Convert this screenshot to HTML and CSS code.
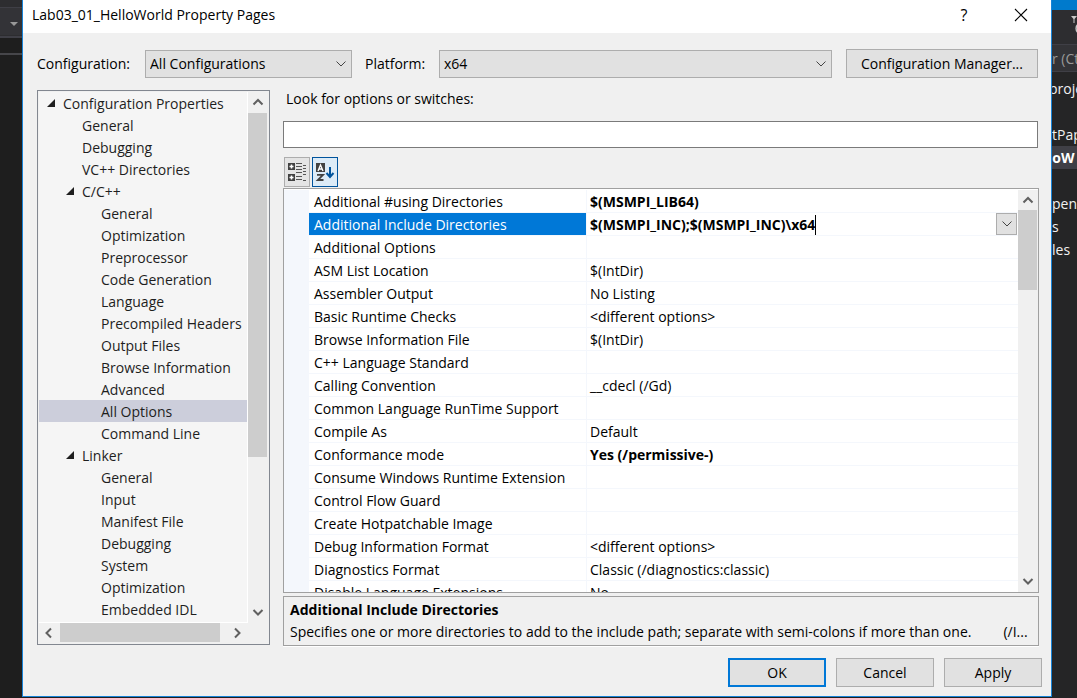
FILE: index.html
```html
<!DOCTYPE html>
<html lang="en">
<head>
<meta charset="utf-8">
<title>Lab03_01_HelloWorld Property Pages</title>
<link rel="stylesheet" href="styles.css">
</head>
<body>
<aside class="ide-left">
  <div class="ide-left-top"></div>
  <div class="ide-left-combo"><svg width="8" height="4" viewBox="0 0 8 4"><path d="M0 0h8L4 4z" fill="#999"/></svg></div>
  <div class="ide-left-line"></div>
  <div class="ide-left-tab"></div>
</aside>
<main class="dialog">
  <header class="titlebar">
    <h1 class="title">Lab03_01_HelloWorld Property Pages</h1>
    <button class="title-btn help" aria-label="Help">?</button>
    <button class="title-btn close" aria-label="Close"><svg width="14" height="14" viewBox="0 0 14 14"><path d="M1 1l12 12M13 1L1 13" stroke="#000" stroke-width="1.1"/></svg></button>
  </header>
  <div class="config-row">
    <label class="config-label" for="cfg">Configuration:</label>
    <select class="combo combo-config" id="cfg"><option>All Configurations</option></select>
    <label class="platform-label" for="plat">Platform:</label>
    <select class="combo combo-platform" id="plat"><option>x64</option></select>
    <button class="btn btn-manager">Configuration Manager...</button>
  </div>
  <div class="content">
    <nav class="tree-pane" aria-label="Configuration Properties">
      <ul class="tree">
        <li class="l0"><svg class="tri" viewBox="0 0 8 8"><path d="M8 0v8H0z"/></svg>Configuration Properties</li>
        <li class="l1">General</li>
        <li class="l1">Debugging</li>
        <li class="l1">VC++ Directories</li>
        <li class="l1"><svg class="tri" viewBox="0 0 8 8"><path d="M8 0v8H0z"/></svg>C/C++</li>
        <li class="l2">General</li>
        <li class="l2">Optimization</li>
        <li class="l2">Preprocessor</li>
        <li class="l2">Code Generation</li>
        <li class="l2">Language</li>
        <li class="l2">Precompiled Headers</li>
        <li class="l2">Output Files</li>
        <li class="l2">Browse Information</li>
        <li class="l2">Advanced</li>
        <li class="l2 selected">All Options</li>
        <li class="l2">Command Line</li>
        <li class="l1"><svg class="tri" viewBox="0 0 8 8"><path d="M8 0v8H0z"/></svg>Linker</li>
        <li class="l2">General</li>
        <li class="l2">Input</li>
        <li class="l2">Manifest File</li>
        <li class="l2">Debugging</li>
        <li class="l2">System</li>
        <li class="l2">Optimization</li>
        <li class="l2">Embedded IDL</li>
      </ul>
      <div class="vscroll">
        <svg class="arrow" viewBox="0 0 20 20"><path d="M5.500 12.500L10 8l4.500 4.500"/></svg>
        <div class="track"><div class="thumb thumb-tree"></div></div>
        <svg class="arrow" viewBox="0 0 20 20"><path d="M5.500 7L10 11.500 14.500 7"/></svg>
      </div>
      <div class="hscroll">
        <svg class="arrow" viewBox="0 0 20 20"><path d="M12 5.500L7.500 10 12 14.500"/></svg>
        <div class="htrack"><div class="hthumb"></div></div>
        <svg class="arrow" viewBox="0 0 20 20"><path d="M7 5.500L11.500 10 7 14.500"/></svg>
      </div>
      <div class="corner"></div>
    </nav>
    <section class="right">
      <label class="search-label" for="look">Look for options or switches:</label>
      <input class="search" id="look" type="text">
      <div class="toolbar">
        <button class="tool" aria-label="Categorized"><svg width="20" height="20" viewBox="0 0 20 20"><path d="M1 1h7v7H1zM1 12h7v7H1z" fill="#424242"/><path d="M4.500 2.500v4M2.500 4.500h4M4.500 13.500v4M2.500 15.500h4" stroke="#fff" stroke-width="1.500"/><path d="M9 1.500h6M9 4.500h6M9 7.500h6M9 10.500h6M9 14.500h6M9 17.500h6M16 3.500h3M16 6.500h3M16 9.500h3M16 12.500h3M16 18.500h3" stroke="#555"/></svg></button>
        <button class="tool active" aria-label="Alphabetical"><svg width="20" height="20" viewBox="0 0 20 20"><path d="M1 1h9v9H1z" fill="#424242"/><path d="M3 9l2.500-6 2.500 6M4 7h3" fill="none" stroke="#fff" stroke-width="1.300"/><path d="M2 12.800h6L2.800 18H8.500" fill="none" stroke="#424242" stroke-width="1.800"/><path d="M15 5v10M11.500 11l3.500 4 3.500-4" fill="none" stroke="#00539c" stroke-width="2"/></svg></button>
      </div>
      <div class="grid-pane">
        <div class="gutter"></div>
        <div class="grid-view">
          <table class="props">
            <tr><th>Additional #using Directories</th><td class="bold">$(MSMPI_LIB64)</td></tr>
            <tr class="current"><th><label for="incdirs">Additional Include Directories</label></th><td class="bold"><div class="editor"><input class="edit" id="incdirs" type="text" value="$(MSMPI_INC);$(MSMPI_INC)\x64"><button class="drop" aria-label="Open list"><svg width="10" height="6" viewBox="0 0 10 6"><path d="M.5.5L5 5 9.500.5" fill="none" stroke="#444"/></svg></button></div></td></tr>
            <tr><th>Additional Options</th><td></td></tr>
            <tr><th>ASM List Location</th><td>$(IntDir)</td></tr>
            <tr><th>Assembler Output</th><td>No Listing</td></tr>
            <tr><th>Basic Runtime Checks</th><td>&lt;different options&gt;</td></tr>
            <tr><th>Browse Information File</th><td>$(IntDir)</td></tr>
            <tr><th>C++ Language Standard</th><td></td></tr>
            <tr><th>Calling Convention</th><td>__cdecl (/Gd)</td></tr>
            <tr><th>Common Language RunTime Support</th><td></td></tr>
            <tr><th>Compile As</th><td>Default</td></tr>
            <tr><th>Conformance mode</th><td class="bold">Yes (/permissive-)</td></tr>
            <tr><th>Consume Windows Runtime Extension</th><td></td></tr>
            <tr><th>Control Flow Guard</th><td></td></tr>
            <tr><th>Create Hotpatchable Image</th><td></td></tr>
            <tr><th>Debug Information Format</th><td>&lt;different options&gt;</td></tr>
            <tr><th>Diagnostics Format</th><td>Classic (/diagnostics:classic)</td></tr>
            <tr><th>Disable Language Extensions</th><td>No</td></tr>
          </table>
        </div>
        <div class="vscroll">
          <svg class="arrow" viewBox="0 0 20 20"><path d="M5.500 12.500L10 8l4.500 4.500"/></svg>
          <div class="track"><div class="thumb thumb-grid"></div></div>
          <svg class="arrow" viewBox="0 0 20 20"><path d="M5.500 7L10 11.500 14.500 7"/></svg>
        </div>
      </div>
      <div class="description">
        <h2 class="desc-title">Additional Include Directories</h2>
        <p class="desc-text"><span>Specifies one or more directories to add to the include path; separate with semi-colons if more than one.</span><span>(/I...</span></p>
      </div>
    </section>
  </div>
  <footer class="buttons">
    <button class="btn btn-action default">OK</button>
    <button class="btn btn-action">Cancel</button>
    <button class="btn btn-action">Apply</button>
  </footer>
</main>
<aside class="ide-right">
  <div class="ide-blue"></div>
  <div class="ide-tools"><i class="sep"></i><svg width="8" height="20" viewBox="0 0 8 20"><path d="M1 1h6L4.500 4v4h-1V4z" fill="#c8c8c8"/><path d="M8 9.500a3.500 4.500 0 0 0 0 8" fill="none" stroke="#c8c8c8" stroke-width="1.500"/></svg></div>
  <div class="ide-search">r (Ct</div>
  <ul class="solution">
    <li class="cut">proje</li><li></li><li>tPap</li><li class="hot">loW</li><li></li><li>pen</li><li>s</li><li>les</li>
  </ul>
</aside>
</body>
</html>
```
FILE: styles.css
```css
* { box-sizing: border-box; }
body {
  margin: 0;
  height: 100vh;
  display: flex;
  overflow: hidden;
  background: #1e1e1e;
  color: #000;
  font: 14px/22px "Open Sans", "Noto Sans", sans-serif;
}
button, input, select { font: inherit; color: inherit; margin: 0; }
ul { list-style: none; margin: 0; padding: 0; }
svg { display: block; flex: none; }

.ide-left { width: 22px; flex: none; }
.ide-left-top { height: 8px; background: #2d2d30; border-bottom: 1px solid #3f3f46; }
.ide-left-combo { height: 27px; padding: 14px 4px 0 10px; background: #333337; overflow: hidden; }
.ide-left-line { height: 3px; background: #2d2d30; border-bottom: 2px solid #3f3f46; }
.ide-left-tab { height: 17px; border-bottom: 2px solid #46464a; }

.ide-right { width: 25px; flex: none; overflow: hidden; background: #252526; color: #f1f1f1; white-space: nowrap; }
.ide-blue { height: 10px; background: #007acc; }
.ide-tools { height: 34px; display: flex; gap: 11px; padding: 5px 0 0 7px; background: #2d2d30; }
.sep { width: 1px; height: 23px; background: #46464a; }
.ide-search { height: 28px; line-height: 28px; background: #333337; color: #999; border: 1px solid #3f3f46; border-width: 1px 0; }
.solution { padding-top: 5px; line-height: 23px; }
.solution li { height: 23px; }
.solution .cut { text-indent: -3px; }
.solution .hot { background: #3f3f46; font-weight: 700; color: #fff; text-indent: -4px; }

.dialog {
  flex: 1;
  min-width: 0;
  display: flex;
  flex-direction: column;
  margin-bottom: 1px;
  background: #f0f0f0;
  border: 1px solid #1883d7;
  border-top: 0;
}
.titlebar { display: flex; align-items: center; height: 33px; padding: 0 9px; background: #fff; }
.title { flex: 1; margin: 0 0 3px; font-size: 14px; font-weight: 400; }
.title-btn { width: 42px; height: 30px; padding: 0; border: 0; background: none; display: flex; align-items: center; justify-content: center; margin-bottom: 4px; }
.help { font-size: 16px; }
.close { margin-left: 15px; }

.config-row { display: flex; align-items: center; padding: 16px 13px 0 14px; height: 45px; flex: none; }
.config-label { width: 108px; }
.platform-label { width: 74px; margin-left: 13px; }
.combo {
  height: 28px;
  padding: 0 0 0 4px;
  border: 1px solid #adadad;
  border-radius: 0;
  appearance: none;
  background: url("data:image/svg+xml,%3Csvg xmlns='http://www.w3.org/2000/svg' width='10' height='6'%3E%3Cpath d='M.5.5L5 5 9.500.5' fill='none' stroke='%23444'/%3E%3C/svg%3E") no-repeat right 5px center #e1e1e1;
}
.combo-config { width: 207px; }
.combo-platform { flex: 1; margin-right: 14px; }
.btn { height: 29px; padding: 0; border: 1px solid #adadad; background: #e1e1e1; }
.btn-manager { width: 192px; }

.content { flex: 1; min-height: 0; display: flex; gap: 13px; padding: 12px 12px 0 14px; }
.tree-pane {
  width: 233px;
  flex: none;
  display: grid;
  grid-template: minmax(0, 1fr) 21px / minmax(0, 1fr) 20px;
  margin-bottom: 1px;
  padding: 1px 1px 0;
  border: 1px solid #828790;
  background: #f0f0f0;
}
.tree { overflow: hidden; background: #f5f5f5; color: #1e1e1e; border-right: 1px solid #fff; border-bottom: 1px solid #fff; }
.tree li { height: 22px; line-height: 24px; display: flex; align-items: flex-start; white-space: nowrap; }
.tree .l0 { padding-left: 24px; }
.tree .l1 { padding-left: 43px; }
.tree .l2 { padding-left: 62px; }
.tree .selected { background: #cccedb; }
.tri { width: 8px; height: 8px; margin: 7px 8px 0 -16px; fill: #1e1e1e; }
.vscroll { width: 20px; display: flex; flex-direction: column; background: #f0f0f0; }
.hscroll { display: flex; background: #f0f0f0; }
.arrow { width: 20px; height: 20px; fill: none; stroke: #606060; stroke-width: 2; }
.track { flex: 1; min-height: 0; }
.htrack { flex: 1; padding-left: 1px; }
.thumb, .hthumb { background: #cdcdcd; }
.thumb { width: 19px; }
.thumb-tree { height: 70%; margin-top: 1px; }
.thumb-grid { height: 22%; }
.hthumb { width: 95%; height: 19px; }

.right { flex: 1; min-width: 0; display: flex; flex-direction: column; }
.search-label { height: 31px; line-height: 18px; padding-left: 3px; flex: none; }
.search { height: 27px; margin-right: 1px; padding: 0 4px; border: 1px solid #7a7a7a; background: #fff; flex: none; }
.toolbar { display: flex; gap: 2px; padding: 9px 0 1px 1px; flex: none; }
.tool { width: 26px; height: 30px; padding: 0 2px; border: 1px solid #adadad; background: #e4e4e4; display: flex; align-items: center; justify-content: center; }
.tool.active { border-color: #00539c; background: #dcebf7; }
.grid-pane { flex: 1; min-height: 0; display: flex; padding: 1px 0 0; border: 1px solid #a0a0a0; background: #fff; }
.gutter { width: 25px; background: #f4f7fc; }
.grid-view { flex: 1; min-width: 0; overflow: hidden; }
.props { width: 100%; border-collapse: separate; border-spacing: 0; table-layout: fixed; }
.props th, .props td { height: 23px; line-height: 20px; text-align: left; white-space: nowrap; border-bottom: 1px solid #f4f7fc; }
.props th { width: 278px; padding: 2px 0 0 5px; font-weight: 400; border-right: 1px solid #f4f7fc; }
.props td { padding: 2px 0 0 3px; }
.props .bold { font-weight: 700; }
.props .current th { background: #0078d7; color: #fff; }
.props .current td { padding-top: 0; }
.editor { display: flex; justify-content: space-between; height: 22px; padding-right: 1px; }
.edit { field-sizing: content; height: 20px; margin-top: 2px; padding: 0; border: 0; border-right: 1px solid #000; background: #fff; outline: 0; }
.drop { width: 21px; height: 22px; padding: 0; border: 1px solid #adadad; background: #e1e1e1; display: flex; align-items: center; justify-content: center; }
.description { flex: none; height: 50px; margin-top: 3px; padding: 1px 6px; border: 1px solid #a0a0a0; box-shadow: 0 1px #fff; }
.desc-title { margin: 0; font-size: 14px; font-weight: 700; line-height: 23px; }
.desc-text { display: flex; gap: 32px; margin: 0; line-height: 22px; white-space: nowrap; }

.buttons { flex: none; display: flex; justify-content: flex-end; gap: 10px; padding: 12px 9px 9px; }
.btn-action { width: 98px; }
.default { border: 2px solid #0078d7; }
```
